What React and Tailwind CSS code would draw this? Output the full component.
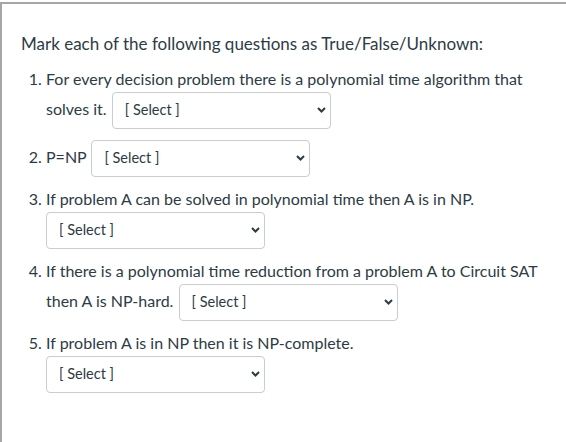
const Select = () => (
  <span className="inline-flex items-center justify-between align-middle w-[219px] h-[37px] my-[1px] pl-[12px] pr-[4px] ml-[1px] border border-[#c7cdd1] rounded-[4px] bg-white text-[14.5px] leading-[20px] text-[#2d3b45]">
    <span className="-mt-[2px]">[ Select ]</span>
    <svg width="9" height="6" viewBox="0 0 9 6" className="-mt-[1px]">
      <path d="M1 1 L4.5 4.5 L8 1" fill="none" stroke="#2d3b45" strokeWidth="2" />
    </svg>
  </span>
);

const questions = [
  { text: "For every decision problem there is a polynomial time algorithm that solves it.", block: false },
  { text: "P=NP", block: false },
  { text: "If problem A can be solved in polynomial time then A is in NP.", block: true },
  { text: "If there is a polynomial time reduction from a problem A to Circuit SAT then A is NP-hard.", block: false },
  { text: "If problem A is in NP then it is NP-complete.", block: true },
];

const App = () => {
  return (
    <div className="min-h-[442px] w-[566px] bg-white border-t-2 border-l-2 border-[#a6a6a6] mt-[2px] font-['Lato',sans-serif] leading-[24px] text-[#2d3b45] overflow-hidden">
      <div className="pl-[19px] pr-[16px] pt-[28px]">
        <p className="mb-[11px] text-[17px]">Mark each of the following questions as True/False/Unknown:</p>
        <ol className="list-decimal pl-[25px] text-[16px]">
          {questions.map((q, i) => (
            <li key={i} className="mb-[9px]">
              {q.text}{" "}
              {q.block ? (
                <div className="-ml-[1px]">
                  <Select />
                </div>
              ) : (
                <Select />
              )}
            </li>
          ))}
        </ol>
      </div>
    </div>
  );
};

export default App;
